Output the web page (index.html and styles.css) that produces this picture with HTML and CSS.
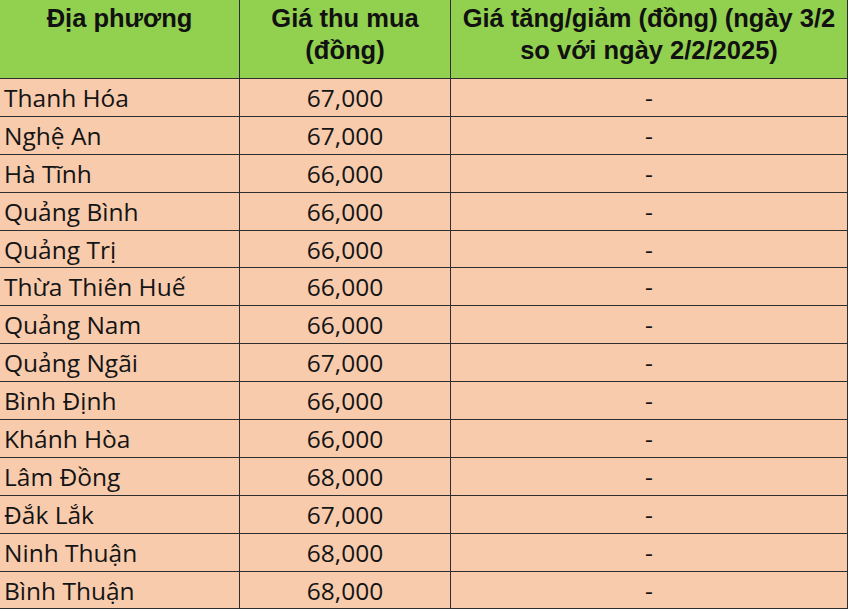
FILE: index.html
```html
<!DOCTYPE html>
<html lang="vi">
<head>
<meta charset="utf-8">
<title>Giá thu mua</title>
<link rel="stylesheet" href="styles.css">
</head>
<body>
<div class="table">
  <div class="th">Địa phương</div>
  <div class="th">Giá thu mua<br>(đồng)</div>
  <div class="th">Giá tăng/giảm (đồng) (ngày 3/2<br>so với ngày 2/2/2025)</div>

  <div class="td name">Thanh Hóa</div><div class="td num">67,000</div><div class="td num">-</div>
  <div class="td name">Nghệ An</div><div class="td num">67,000</div><div class="td num">-</div>
  <div class="td name">Hà Tĩnh</div><div class="td num">66,000</div><div class="td num">-</div>
  <div class="td name">Quảng Bình</div><div class="td num">66,000</div><div class="td num">-</div>
  <div class="td name">Quảng Trị</div><div class="td num">66,000</div><div class="td num">-</div>
  <div class="td name">Thừa Thiên Huế</div><div class="td num">66,000</div><div class="td num">-</div>
  <div class="td name">Quảng Nam</div><div class="td num">66,000</div><div class="td num">-</div>
  <div class="td name">Quảng Ngãi</div><div class="td num">67,000</div><div class="td num">-</div>
  <div class="td name">Bình Định</div><div class="td num">66,000</div><div class="td num">-</div>
  <div class="td name">Khánh Hòa</div><div class="td num">66,000</div><div class="td num">-</div>
  <div class="td name">Lâm Đồng</div><div class="td num">68,000</div><div class="td num">-</div>
  <div class="td name">Đắk Lắk</div><div class="td num">67,000</div><div class="td num">-</div>
  <div class="td name">Ninh Thuận</div><div class="td num">68,000</div><div class="td num">-</div>
  <div class="td name">Bình Thuận</div><div class="td num">68,000</div><div class="td num">-</div>
</div>
</body>
</html>
```

FILE: styles.css
```css
html, body {
  margin: 0;
  padding: 0;
  background: #ffffff;
}

.table {
  display: grid;
  grid-template-columns: 240px 211px 397px;
  grid-template-rows: 79px;
  grid-auto-rows: 37.9px;
  width: 848px;
}

.th, .td {
  box-sizing: border-box;
  border-right: 1px solid #2e2e2e;
  border-bottom: 1px solid #2e2e2e;
  color: #111111;
  white-space: nowrap;
  overflow: hidden;
}

.th {
  background: #92d050;
  font-family: "Liberation Sans", Arial, sans-serif;
  font-weight: bold;
  font-size: 25.5px;
  line-height: 32px;
  text-align: center;
  padding-top: 2px;
}

.td {
  background: #f8cbad;
  font-family: "Open Sans", sans-serif;
  font-size: 24.5px;
  line-height: 37px;
  color: #141414;
}

.name {
  padding-left: 4px;
  text-align: left;
}

.num {
  text-align: center;
}
```
